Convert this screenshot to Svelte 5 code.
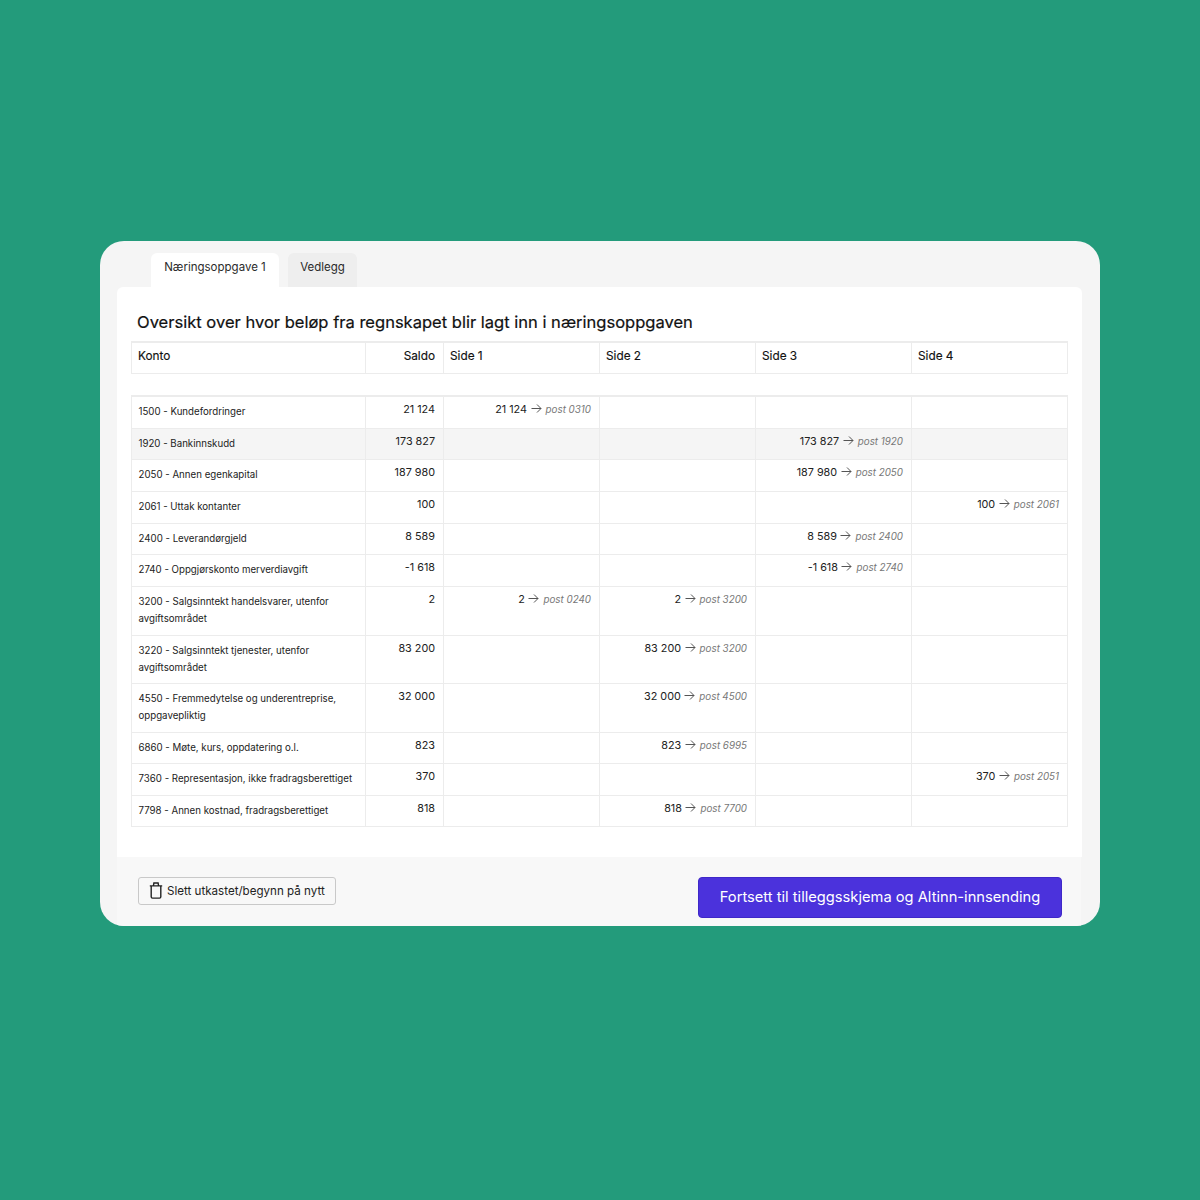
<script lang="ts">
	const rows = [
		{ konto: '1500 - Kundefordringer', saldo: '21 124', h: 32, side: { 1: ['21 124', '0310'] } },
		{ konto: '1920 - Bankinnskudd', saldo: '173 827', h: 31, shaded: true, side: { 3: ['173 827', '1920'] } },
		{ konto: '2050 - Annen egenkapital', saldo: '187 980', h: 32, side: { 3: ['187 980', '2050'] } },
		{ konto: '2061 - Uttak kontanter', saldo: '100', h: 32, side: { 4: ['100', '2061'] } },
		{ konto: '2400 - Leverandørgjeld', saldo: '8 589', h: 31, side: { 3: ['8 589', '2400'] } },
		{ konto: '2740 - Oppgjørskonto merverdiavgift', saldo: '-1 618', h: 32, side: { 3: ['-1 618', '2740'] } },
		{ konto: '3200 - Salgsinntekt handelsvarer, utenfor avgiftsområdet', saldo: '2', h: 49, side: { 1: ['2', '0240'], 2: ['2', '3200'] } },
		{ konto: '3220 - Salgsinntekt tjenester, utenfor avgiftsområdet', saldo: '83 200', h: 48, side: { 2: ['83 200', '3200'] } },
		{ konto: '4550 - Fremmedytelse og underentreprise, oppgavepliktig', saldo: '32 000', h: 49, side: { 2: ['32 000', '4500'] } },
		{ konto: '6860 - Møte, kurs, oppdatering o.l.', saldo: '823', h: 31, side: { 2: ['823', '6995'] } },
		{ konto: '7360 - Representasjon, ikke fradragsberettiget', saldo: '370', h: 32, side: { 4: ['370', '2051'] } },
		{ konto: '7798 - Annen kostnad, fradragsberettiget', saldo: '818', h: 31, side: { 2: ['818', '7700'] } }
	];
	const sides = [1, 2, 3, 4];
</script>

<div class="page">
	<div class="panel">
		<div class="tabs">
			<div class="tab active">Næringsoppgave 1</div>
			<div class="tab">Vedlegg</div>
		</div>
		<div class="card">
			<h1>Oversikt over hvor beløp fra regnskapet blir lagt inn i næringsoppgaven</h1>
			<div class="table head">
				<div class="row head-row">
					<div class="cell">Konto</div>
					<div class="cell right">Saldo</div>
					{#each sides as s}
						<div class="cell">Side {s}</div>
					{/each}
				</div>
			</div>
			<div class="table body">
				{#each rows as row}
					<div class="row" class:shaded={row.shaded} style="height: {row.h}px">
						<div class="cell konto">{row.konto}</div>
						<div class="cell right">{row.saldo}</div>
						{#each sides as s}
							<div class="cell right">
								{#if row.side[s]}
									{row.side[s][0]}
									<svg class="arrow" width="11" height="11" viewBox="0 0 11 11" fill="none"
										><path d="M.5 5.5h9.5M6 1.5l4 4-4 4" stroke="currentColor" stroke-width="1" /></svg
									>
									<em>post {row.side[s][1]}</em>
								{/if}
							</div>
						{/each}
					</div>
				{/each}
			</div>
		</div>
		<div class="footer">
			<button class="delete">
				<svg width="14" height="17" viewBox="0 0 14 17" fill="none">
					<path
						d="M.8 3.9h12.4M2.2 3.9v10.9c0 .7.6 1.3 1.3 1.3h7c.7 0 1.3-.6 1.3-1.3V3.9M4.4 3.9l.5-2.9h4.2l.5 2.9"
						stroke="currentColor"
						stroke-width="1.4"
					/>
				</svg>
				Slett utkastet/begynn på nytt
			</button>
			<button class="primary">Fortsett til tilleggsskjema og Altinn-innsending</button>
		</div>
	</div>
</div>

<style>
	:global(body) {
		margin: 0;
	}
	.page {
		width: 1200px;
		height: 1200px;
		box-sizing: border-box;
		padding-top: 241px;
		background: #239b7b;
		font-family: Inter, 'Liberation Sans', sans-serif;
		color: #1c1c1c;
	}
	.panel {
		width: 1000px;
		height: 685px;
		margin: 0 auto;
		background: #f5f5f5;
		border-radius: 24px;
		overflow: hidden;
		display: flex;
		flex-direction: column;
		padding: 12px 18px 0 17px;
		box-sizing: border-box;
	}
	.tabs {
		display: flex;
		gap: 9px;
		padding-left: 34px;
		height: 34px;
	}
	.tab {
		width: 69px;
		height: 34px;
		line-height: 29px;
		text-align: center;
		background: #eeeeee;
		border-radius: 6px 6px 0 0;
		font-size: 11.5px;
		color: #2b2b2b;
	}
	.tab.active {
		width: 128px;
		background: #fff;
	}
	.card {
		background: #fff;
		border-radius: 6px 6px 0 0;
		height: 570px;
		padding: 25px 14px 0 14px;
		box-sizing: border-box;
	}
	h1 {
		margin: 0 0 9px 6px;
		font-size: 16.55px;
		line-height: 20px;
		font-weight: 400;
		color: #111;
		-webkit-text-stroke: 0.2px #111;
	}
	.table {
		width: 937px;
		border-top: 2px solid #ececec;
		border-left: 1px solid #ececec;
		box-sizing: border-box;
	}
	.table.head {
		margin-bottom: 21px;
	}
	.row {
		display: grid;
		grid-template-columns: 234px 78px 156px 156px 156px 156px;
		box-sizing: border-box;
		border-bottom: 1.5px solid #ececec;
	}
	.head-row {
		height: 31px;
	}
	.head-row .cell {
		font-size: 11.8px;
		padding-top: 5px;
		padding-left: 6px;
		color: #111;
		-webkit-text-stroke: 0.15px #111;
	}
	.shaded {
		background: #f5f5f5;
	}
	.cell {
		box-sizing: border-box;
		padding: 4px 8px 0 6.5px;
		font-size: 10.8px;
		line-height: 17px;
		border-right: 1.5px solid #ececec;
		white-space: nowrap;
		color: #222;
	}
	.konto {
		white-space: normal;
		padding-top: 5.5px;
		font-size: 9.7px;
		padding-right: 2px;
	}
	.right {
		text-align: right;
	}
	.arrow {
		vertical-align: -0.5px;
		margin: 0 1px 0 0.5px;
		color: #555;
	}
	em {
		color: #777;
		font-size: 9.8px;
	}
	.footer {
		height: 69px;
		margin: 0 1px 0 0;
		background: #f8f8f8;
		display: flex;
		justify-content: space-between;
		align-items: flex-start;
		padding: 20px 19px 0 21px;
		box-sizing: border-box;
	}
	button {
		font-family: inherit;
		cursor: pointer;
	}
	.delete {
		height: 28px;
		width: 198px;
		display: flex;
		align-items: center;
		gap: 4px;
		padding: 0 0 0 10px;
		background: #f8f8f8;
		border: 1px solid #c9c9c9;
		border-radius: 3px;
		font-size: 11.6px;
		color: #222;
	}
	.delete svg {
		margin-top: -2px;
	}
	.primary {
		height: 41px;
		width: 364px;
		padding-bottom: 3px;
		background: #4b32dc;
		border: 1px solid #3f28c8;
		border-radius: 4px;
		color: #fff;
		font-size: 14.7px;
	}
</style>
